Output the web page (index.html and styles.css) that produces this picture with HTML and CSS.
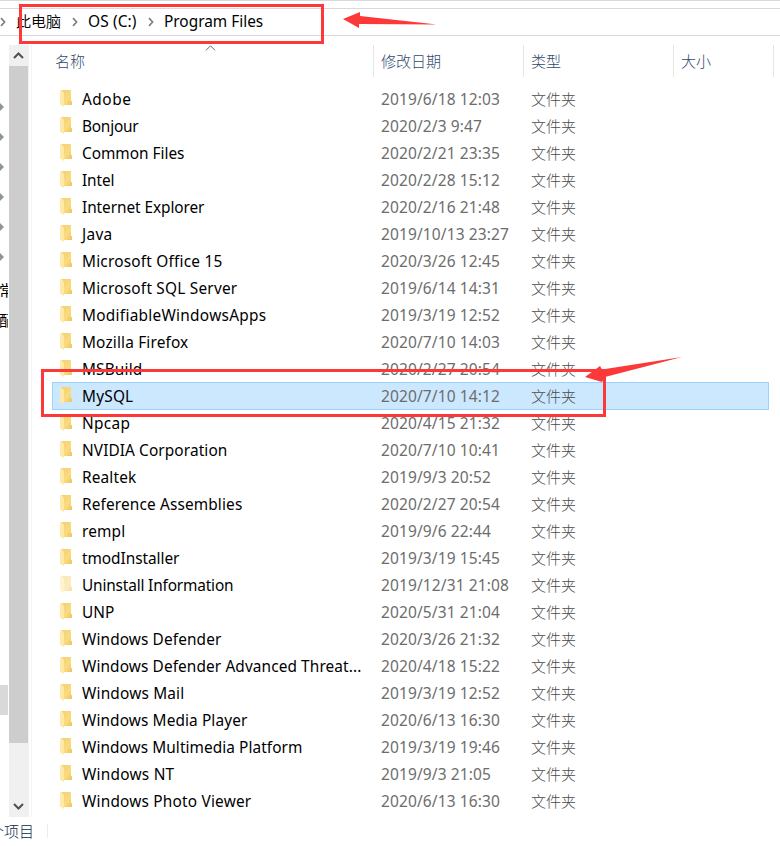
FILE: index.html
```
<!DOCTYPE html>
<html lang="zh-CN">
<head>
<meta charset="utf-8">
<title>Program Files</title>
<link rel="stylesheet" href="styles.css">
</head>
<body>
<svg width="0" height="0" class="defs">
  <defs>
    <linearGradient id="fold" x1="0" y1="0" x2="1" y2="1"><stop offset="0" stop-color="#f3cf72"/><stop offset=".6" stop-color="#fadb80"/><stop offset="1" stop-color="#eec45a"/></linearGradient>
    <symbol id="folder" viewBox="0 0 12 17"><path d="M1 0H11V11H12V15H3V2Z" fill="url(#fold)"/><path d="M0 0L4 3V17L0 14.5Z" fill="#ffe9a6"/></symbol>
    <symbol id="chev" viewBox="0 0 6 10"><path d="M1 1.2L4.6 5L1 8.8" fill="none" stroke="#808080" stroke-width="1.7"/></symbol>
  </defs>
</svg>
<div class="window">
  <div class="strip"></div>
  <nav class="address">
    <svg class="chev"><use href="#chev"/></svg><span class="crumb pc">此电脑</span>
    <svg class="chev"><use href="#chev"/></svg><span class="crumb drive">OS (C:)</span>
    <svg class="chev"><use href="#chev"/></svg><span class="crumb dir">Program Files</span>
  </nav>
  <div class="main">
    <aside class="tree">
      <div class="pins"><i></i><i></i><i></i><i></i><i></i><i></i></div>
      <div class="label">常</div>
      <div class="label">配</div>
      <div class="current"></div>
    </aside>
    <div class="scrollbar">
      <svg width="19" height="21"><path d="M5 13L9.5 8.5L14 13" fill="none" stroke="#505050" stroke-width="2"/></svg>
      <div class="thumb"></div>
      <svg class="down" width="19" height="21"><path d="M5 8L9.5 12.5L14 8" fill="none" stroke="#505050" stroke-width="2"/></svg>
    </div>
    <section class="files">
      <header class="columns">
        <div class="col name">名称<svg class="sort" width="11" height="6"><path d="M1 5.3L5.5 .8L10 5.3" fill="none" stroke="#666"/></svg></div>
        <div class="col">修改日期</div><div class="col">类型</div><div class="col size">大小</div>
      </header>
      <div class="list" id="list"></div>
    </section>
  </div>
  <footer class="status"><span>个项目</span></footer>
  <div class="mark path-mark"></div>
  <div class="mark row-mark"></div>
  <svg class="arrows" width="780" height="846"><path d="M343 19L360 12V16L437 24.5L359 24V28Z"/><path d="M585 377L600 366L602 369.5L682 357L605 377L602 382Z"/></svg>
</div>
<script src="list.js"></script>
</body>
</html>
```
FILE: styles.css
```
* { box-sizing: border-box; }
body { margin: 0; background: #fff; color: #000; font: 15px/27px "Noto Sans", "Noto Sans CJK SC", sans-serif; }
.defs { position: absolute; }
.window { position: relative; width: 780px; height: 846px; overflow: hidden; }
.strip { height: 8px; border-top: 1px solid #d9d9d9; }
.address { display: flex; align-items: center; height: 28px; border: solid #d9d9d9; border-width: 1px 0; }
.chev { width: 6px; height: 10px; flex: none; }
.crumb { white-space: nowrap; flex: none; padding-bottom: 2px; }
.pc { width: 56px; margin-left: 10px; font-weight: 350; }
.drive { width: 50px; margin: 0 10px; font-size: 15.5px; letter-spacing: .1px; }
.address .dir { margin-left: 10px; font-size: 15.4px; }
.main { display: flex; height: 772px; margin-top: 9px; }
.tree { width: 8px; margin-right: 1px; overflow: hidden; flex: none; }
.pins { padding-top: 58px; height: 230px; }
.pins i { display: block; width: 4px; height: 8px; margin-bottom: 22px; background: #8b959c; clip-path: polygon(0 0, 100% 50%, 0 100%); }
.label { height: 30px; line-height: 30px; white-space: nowrap; margin-left: -1px; }
.current { height: 30px; margin-top: 350px; background: #d9d9d9; }
.scrollbar { display: flex; flex-direction: column; width: 20px; background: #f0f0f0; flex: none; }
.scrollbar svg { display: block; }
.scrollbar .down { margin-top: auto; }
.thumb { width: 19px; height: 677px; background: #cdcdcd; }
.files { margin-left: 2px; border-left: 1px solid #f3f3f3; flex: 1; min-width: 0; }
.columns { display: flex; height: 41px; color: #304a6c; font-weight: 300; }
.col { width: 150px; height: 32px; padding: 4px 0 0 7px; line-height: 24px; border-left: 1px solid #e5e5e5; }
.name { position: relative; width: 341px; padding-left: 23px; border: 0; }
.size { width: 101px; border-right: 1px solid #e5e5e5; }
.sort { position: absolute; left: 173px; top: 0; }
.row { display: flex; height: 27px; margin-left: 20px; width: 717px; }
.row svg { width: 12px; height: 17px; margin: 4px 10px 0 8px; flex: none; }
.row .title { width: 299px; white-space: nowrap; font-size: 15.4px; }
.row .date { width: 150px; color: #6d6d6d; font-size: 15.5px; letter-spacing: .12px; }
.row .type { color: #4a4a4a; font-weight: 300; }
.row.selected { height: 28px; margin-top: -1px; background: #cce8ff; box-shadow: inset 0 0 0 1px #99d1ff; padding-top: 1px; }
.row.hidden svg { opacity: .5; }
.status { display: flex; align-items: center; height: 28px; color: #0c2748; font-weight: 300; }
.status span { width: 59px; margin-left: -11px; border-right: 1px solid #ececec; height: 14px; line-height: 14px; }
.mark { position: absolute; border: 3px solid #fd3838; }
.path-mark { left: 19px; top: 4px; width: 305px; height: 40px; }
.row-mark { left: 41px; top: 369px; width: 565px; height: 48px; }
.arrows { position: absolute; left: 0; top: 0; fill: #fd3838; }
```
FILE: list.js
```
// name, modified date, drawn width of the name, optional state
const files = [
  ["Adobe", "2019/6/18 12:03", 50], ["Bonjour", "2020/2/3 9:47", 57], ["Common Files", "2020/2/21 23:35", 103],
  ["Intel", "2020/2/28 15:12", 33], ["Internet Explorer", "2020/2/16 21:48", 123], ["Java", "2019/10/13 23:27", 31],
  ["Microsoft Office 15", "2020/3/26 12:45", 141], ["Microsoft SQL Server", "2019/6/14 14:31", 156],
  ["ModifiableWindowsApps", "2019/3/19 12:52", 185], ["Mozilla Firefox", "2020/7/10 14:03", 107],
  ["MSBuild", "2020/2/27 20:54", 61], ["MySQL", "2020/7/10 14:12", 52, "selected"], ["Npcap", "2020/4/15 21:32", 49],
  ["NVIDIA Corporation", "2020/7/10 10:41", 146], ["Realtek", "2019/9/3 20:52", 55], ["Reference Assemblies", "2020/2/27 20:54", 161],
  ["rempl", "2019/9/6 22:44", 44], ["tmodInstaller", "2019/3/19 15:45", 98], ["Uninstall Information", "2019/12/31 21:08", 152, "hidden"],
  ["UNP", "2020/5/31 21:04", 33], ["Windows Defender", "2020/3/26 21:32", 140], ["Windows Defender Advanced Threat...", "2020/4/18 15:22", 280],
  ["Windows Mail", "2019/3/19 12:52", 103], ["Windows Media Player", "2020/6/13 16:30", 166],
  ["Windows Multimedia Platform", "2019/3/19 19:46", 221], ["Windows NT", "2019/9/3 21:05", 93], ["Windows Photo Viewer", "2020/6/13 16:30", 170]
];
const list = document.getElementById("list");
list.innerHTML = files.map(([name, date, width, state = ""]) =>
  `<div class="row ${state}"><svg><use href="#folder"/></svg><span class="title"><span>${name}</span></span><span class="date">${date}</span><span class="type">文件夹</span></div>`
).join("");
list.querySelectorAll(".title > span").forEach((el, i) => {
  const [name, , width] = files[i];
  el.style.letterSpacing = (width - .6 - el.getBoundingClientRect().width) / name.length + "px";
});
```
